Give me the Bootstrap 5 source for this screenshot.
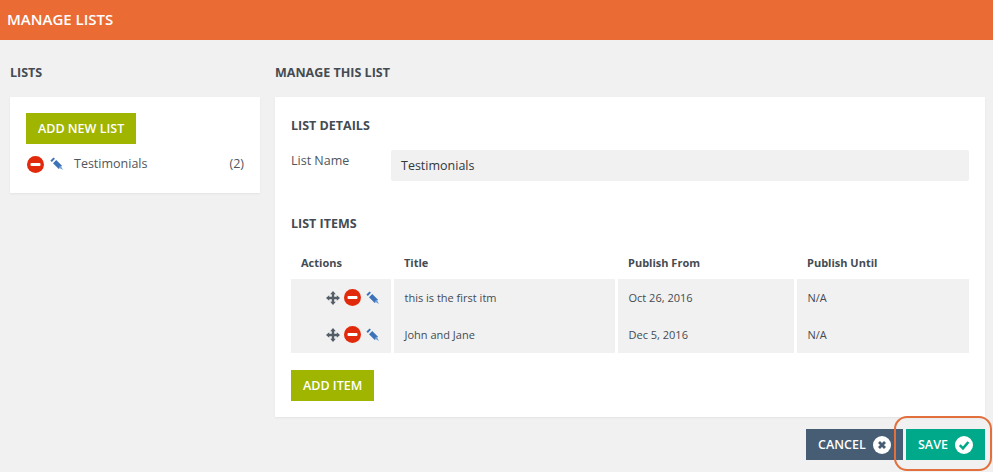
<!DOCTYPE html>
<html lang="en">
<head>
<meta charset="utf-8">
<title>Manage Lists</title>
<link rel="stylesheet" href="https://cdn.jsdelivr.net/npm/bootstrap@5.3.0/dist/css/bootstrap.min.css">
<style>
html,body{height:100%}
body{background:#f1f1f1;font-family:"Open Sans",sans-serif;color:#50565c;font-size:12.5px;overflow:hidden}
.top-bar{height:40px;background:#eb6b34;color:#fff;font-weight:600;font-size:15px;line-height:39px;padding-left:7px}
.page-cols{display:flex;padding:0 8px 0 10px;gap:15px}
.left-col{width:250px;flex:none}
.right-col{flex:1;min-width:0}
.sec-title{font-size:12.5px;font-weight:700;color:#444b52;height:57px;line-height:65px;margin:0}
.panel-white{background:#fff;box-shadow:0 1px 2px rgba(0,0,0,.06)}
.left-panel{height:96px;padding:16px}
.right-panel{height:320px;padding:20px 16px 0}
.btn-olive{background:#9fb500;color:#fff;font-weight:600;font-size:12.5px;border:0;border-radius:0;padding:0 12px;height:31px;line-height:31px}
.list-row{display:flex;align-items:center;height:20px;margin-top:10px;padding-left:1px}
.list-row svg{flex:none}
.list-row svg+svg{margin-left:6px}
.list-label{margin-left:10px;flex:1}
.sub-title{font-size:12.5px;font-weight:700;color:#444b52;margin:0;line-height:17px}
.name-row{display:flex;margin-top:16px;height:31px}
.name-label{width:100px;line-height:22px}
.name-value{flex:1;background:#f1f1f1;line-height:31px;padding-left:10px;color:#33363a;border-radius:2px}
.sub-items{margin-top:34px}
.items-grid{display:grid;grid-template-columns:100px 221px 176px 172px;column-gap:3px;margin-top:16px;font-size:11px}
.grid-head{font-weight:700;height:31px;line-height:30px;padding-left:10px;color:#444b52}
.cell-body{background:#f1f1f1;height:37px;line-height:37px;padding-left:10.5px;color:#444b52}
.cell-actions{display:flex;align-items:center;justify-content:flex-end;gap:4px;padding:0 11px 0 0}
.cell-actions svg:last-child{margin-left:1px}
.add-item-btn{margin-top:17px}
.foot-btns{display:flex;justify-content:flex-end;gap:3px;margin-top:12px;position:relative}
.btn-foot{color:#fff;font-weight:600;font-size:12.5px;height:31px;display:flex;align-items:center;justify-content:space-between;padding:1px 12px 0 12px;border:0;border-radius:0}
.btn-cancel{background:#465d74;width:97px}
.btn-save{background:#00a98a;width:79px}
.save-ring{position:absolute;right:-7px;top:-13px;width:98px;height:55px;border:2px solid #e2703c;border-radius:13px;pointer-events:none}
</style>
</head>
<body>
<div class="top-bar">MANAGE LISTS</div>
<div class="page-cols">
  <div class="left-col">
    <h2 class="sec-title">LISTS</h2>
    <div class="panel-white left-panel">
      <button class="btn btn-olive" type="button">ADD NEW LIST</button>
      <div class="list-row">
        <svg width="17" height="17" viewBox="0 0 17 17"><circle cx="8.5" cy="8.5" r="8.5" fill="#e12a0c"/><rect x="3.5" y="7" width="10" height="3" rx="1" fill="#fff"/></svg>
        <svg width="14" height="14" viewBox="0 0 14 14"><path d="M2 2 3.4 3.4" stroke="#3b72b8" stroke-width="4.4"/><path d="M4.6 4.6 10.4 10.4" stroke="#3b72b8" stroke-width="4.6"/><path d="M10.6 8.6 13 13 8.6 10.6Z" fill="#6f9ed6"/></svg>
        <span class="list-label">Testimonials</span>
        <span>(2)</span>
      </div>
    </div>
  </div>
  <div class="right-col">
    <h2 class="sec-title">MANAGE THIS LIST</h2>
    <div class="panel-white right-panel">
      <h3 class="sub-title">LIST DETAILS</h3>
      <div class="name-row">
        <div class="name-label">List Name</div>
        <div class="name-value">Testimonials</div>
      </div>
      <h3 class="sub-title sub-items">LIST ITEMS</h3>
      <div class="items-grid">
        <div class="grid-head">Actions</div>
        <div class="grid-head">Title</div>
        <div class="grid-head">Publish From</div>
        <div class="grid-head">Publish Until</div>

        <div class="cell-body cell-actions">
          <svg width="14" height="14" viewBox="0 0 14 14" fill="#555d66"><path d="M7 0 9.8 3.2H8.2v2.6h2.6V4.2L14 7l-3.2 2.8V8.2H8.2v2.6h1.6L7 14l-2.8-3.2h1.6V8.2H3.2v1.6L0 7l3.2-2.8v1.6h2.6V3.2H4.2Z"/></svg>
          <svg width="17" height="17" viewBox="0 0 17 17"><circle cx="8.5" cy="8.5" r="8.5" fill="#e12a0c"/><rect x="3.5" y="7" width="10" height="3" rx="1" fill="#fff"/></svg>
          <svg width="14" height="14" viewBox="0 0 14 14"><path d="M2 2 3.4 3.4" stroke="#3b72b8" stroke-width="4.4"/><path d="M4.6 4.6 10.4 10.4" stroke="#3b72b8" stroke-width="4.6"/><path d="M10.6 8.6 13 13 8.6 10.6Z" fill="#6f9ed6"/></svg>
        </div>
        <div class="cell-body">this is the first itm</div>
        <div class="cell-body">Oct 26, 2016</div>
        <div class="cell-body">N/A</div>

        <div class="cell-body cell-actions">
          <svg width="14" height="14" viewBox="0 0 14 14" fill="#555d66"><path d="M7 0 9.8 3.2H8.2v2.6h2.6V4.2L14 7l-3.2 2.8V8.2H8.2v2.6h1.6L7 14l-2.8-3.2h1.6V8.2H3.2v1.6L0 7l3.2-2.8v1.6h2.6V3.2H4.2Z"/></svg>
          <svg width="17" height="17" viewBox="0 0 17 17"><circle cx="8.5" cy="8.5" r="8.5" fill="#e12a0c"/><rect x="3.5" y="7" width="10" height="3" rx="1" fill="#fff"/></svg>
          <svg width="14" height="14" viewBox="0 0 14 14"><path d="M2 2 3.4 3.4" stroke="#3b72b8" stroke-width="4.4"/><path d="M4.6 4.6 10.4 10.4" stroke="#3b72b8" stroke-width="4.6"/><path d="M10.6 8.6 13 13 8.6 10.6Z" fill="#6f9ed6"/></svg>
        </div>
        <div class="cell-body">John and Jane</div>
        <div class="cell-body">Dec 5, 2016</div>
        <div class="cell-body">N/A</div>
      </div>
      <button class="btn btn-olive add-item-btn" type="button">ADD ITEM</button>
    </div>
    <div class="foot-btns">
      <button class="btn btn-foot btn-cancel" type="button">CANCEL
        <svg width="18" height="18" viewBox="0 0 18 18"><circle cx="9" cy="9" r="9" fill="#fff"/><path d="M6 6l6 6M12 6l-6 6" stroke="#465d74" stroke-width="2.8"/></svg>
      </button>
      <button class="btn btn-foot btn-save" type="button">SAVE
        <svg width="18" height="18" viewBox="0 0 18 18"><circle cx="9" cy="9" r="9" fill="#fff"/><path d="M4.8 9.2 8 12.4 13.4 6" fill="none" stroke="#00a98a" stroke-width="2.6"/></svg>
      </button>
      <div class="save-ring"></div>
    </div>
  </div>
</div>
<script src="https://cdn.jsdelivr.net/npm/bootstrap@5.3.0/dist/js/bootstrap.bundle.min.js"></script>
</body>
</html>
